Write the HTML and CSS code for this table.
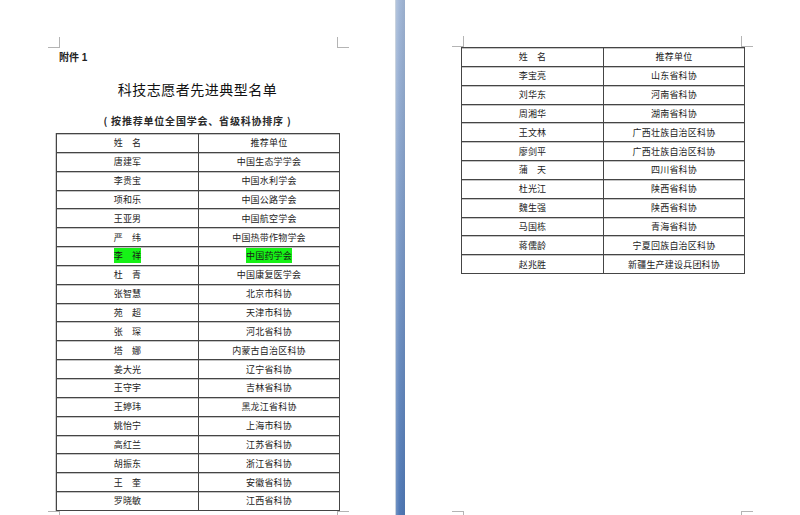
FILE: index.html
```html
<!DOCTYPE html>
<html lang="zh-CN">
<head>
<meta charset="utf-8">
<title>科技志愿者先进典型名单</title>
<link rel="stylesheet" href="styles.css">
</head>
<body>
<div class="viewer">
  <section class="page page-left">
    <div class="sheet">
      <div class="marks marks-top"><span class="mark m-tl"></span><span class="mark m-tr"></span></div>
      <p class="annex">附件 1</p>
      <h1 class="title">科技志愿者先进典型名单</h1>
      <p class="subtitle">( 按推荐单位全国学会、省级科协排序 )</p>
      <table class="list list-left">
        <colgroup><col class="c-name"><col class="c-unit"></colgroup>
        <tr><th>姓　名</th><th>推荐单位</th></tr>
        <tr><td>唐建军</td><td>中国生态学学会</td></tr>
        <tr><td>李贵宝</td><td>中国水利学会</td></tr>
        <tr><td>项和乐</td><td>中国公路学会</td></tr>
        <tr><td>王亚男</td><td>中国航空学会</td></tr>
        <tr><td>严　纬</td><td>中国热带作物学会</td></tr>
        <tr><td><mark class="hl">李　祥</mark></td><td><mark class="hl">中国药学会</mark></td></tr>
        <tr><td>杜　青</td><td>中国康复医学会</td></tr>
        <tr><td>张智慧</td><td>北京市科协</td></tr>
        <tr><td>苑　超</td><td>天津市科协</td></tr>
        <tr><td>张　琛</td><td>河北省科协</td></tr>
        <tr><td>塔　娜</td><td>内蒙古自治区科协</td></tr>
        <tr><td>姜大光</td><td>辽宁省科协</td></tr>
        <tr><td>王守宇</td><td>吉林省科协</td></tr>
        <tr><td>王婷玮</td><td>黑龙江省科协</td></tr>
        <tr><td>姚怡宁</td><td>上海市科协</td></tr>
        <tr><td>高红兰</td><td>江苏省科协</td></tr>
        <tr><td>胡振东</td><td>浙江省科协</td></tr>
        <tr><td>王　奎</td><td>安徽省科协</td></tr>
        <tr><td>罗晓敏</td><td>江西省科协</td></tr>
      </table>
    </div>
    <div class="marks marks-bottom"><span class="mark m-bl"></span><span class="mark m-br"></span></div>
  </section>
  <div class="gutter"></div>
  <section class="page page-right">
    <div class="sheet">
      <div class="marks marks-top"><span class="mark m-tl"></span><span class="mark m-tr"></span></div>
      <table class="list list-right">
        <colgroup><col class="c-name"><col class="c-unit"></colgroup>
        <tr><th>姓　名</th><th>推荐单位</th></tr>
        <tr><td>李宝亮</td><td>山东省科协</td></tr>
        <tr><td>刘华东</td><td>河南省科协</td></tr>
        <tr><td>周湘华</td><td>湖南省科协</td></tr>
        <tr><td>王文林</td><td>广西壮族自治区科协</td></tr>
        <tr><td>廖剑平</td><td>广西壮族自治区科协</td></tr>
        <tr><td>蒲　天</td><td>四川省科协</td></tr>
        <tr><td>杜光江</td><td>陕西省科协</td></tr>
        <tr><td>魏生强</td><td>陕西省科协</td></tr>
        <tr><td>马国栋</td><td>青海省科协</td></tr>
        <tr><td>蒋儒龄</td><td>宁夏回族自治区科协</td></tr>
        <tr><td>赵兆胜</td><td>新疆生产建设兵团科协</td></tr>
      </table>
    </div>
    <div class="marks marks-bottom"><span class="mark m-bl"></span><span class="mark m-br"></span></div>
  </section>
</div>
</body>
</html>
```
FILE: styles.css
```css
html, body {
  margin: 0;
  padding: 0;
  height: 515px;
  overflow: hidden;
  background: #ffffff;
}

body {
  font-family: "Liberation Sans", "Noto Sans CJK SC", sans-serif;
  color: #1c1c1c;
}

.viewer {
  display: flex;
  height: 515px;
}

.page {
  display: flex;
  flex-direction: column;
  box-sizing: border-box;
  height: 530px;
  padding-bottom: 8px;
  background: #ffffff;
}

.page-left {
  width: 395px;
  padding-left: 48px;
  padding-top: 37px;
}

.page-right {
  flex: 1;
  padding-left: 47px;
  padding-top: 36px;
}

.sheet {
  width: 301px;
  display: flex;
  flex-direction: column;
}

.gutter {
  width: 10px;
  flex: none;
  box-sizing: border-box;
  border-left: 1px solid #c9d3de;
  background: linear-gradient(to right, rgba(255,255,255,0.18), rgba(255,255,255,0) 40%, rgba(0,0,0,0.06)),
              linear-gradient(to bottom, #a3b8d7, #7d9bc8 45%, #5079b6);
}

/* crop marks */
.marks {
  display: flex;
  justify-content: space-between;
  width: 301px;
}

.mark {
  display: block;
  width: 11px;
  height: 10px;
  border-color: #b4b4b4;
  border-style: solid;
  border-width: 0;
}

.marks-top .m-tl { border-right-width: 1px; border-bottom-width: 1px; }
.marks-top .m-tr { border-left-width: 1px; border-bottom-width: 1px; }

.marks-bottom {
  margin-top: auto;
}
.marks-bottom .m-bl { border-right-width: 1px; border-top-width: 1px; }
.marks-bottom .m-br { border-left-width: 1px; border-top-width: 1px; }

/* headings */
.annex {
  margin: 3px 0 0 11px;
  font-size: 10px;
  line-height: 14px;
  font-weight: bold;
  color: #222;
}

.title {
  margin: 14px 0 0 0;
  font-family: "Noto Sans CJK SC", sans-serif;
  font-size: 14px;
  line-height: 20px;
  font-weight: normal;
  letter-spacing: 0.5px;
  text-align: center;
  color: #111;
  padding-right: 2px;
}

.subtitle {
  margin: 15px 0 0 0;
  font-family: "Noto Sans CJK SC", sans-serif;
  font-size: 10px;
  line-height: 14px;
  font-weight: bold;
  letter-spacing: 0.8px;
  text-align: center;
  color: #2a2a2a;
  padding-right: 2px;
}

/* tables */
.list {
  border-collapse: collapse;
  table-layout: fixed;
  width: 283px;
  font-family: "Noto Sans CJK SC", sans-serif;
  font-size: 9px;
  letter-spacing: 0.2px;
  color: #222;
}

.list-left {
  margin: 5px 0 0 8px;
  box-shadow: -1px 0 0 #d0d0d0;
}

.list-right {
  margin: 0 0 0 9px;
}

.c-name { width: 142px; }
.c-unit { width: 141px; }

.list th,
.list td {
  border: 1px solid #454545;
  height: 17.85px;
  padding: 0;
  text-align: center;
  vertical-align: middle;
  font-weight: normal;
  line-height: 1;
  box-shadow: inset 0 1px 0 #c4c4c4;
}

.list td + td,
.list th + th {
  border-left: 1px solid #6a6a6a;
}

.hl {
  background: #16f216;
  color: #1a1a1a;
  padding: 1px 0;
}
```
